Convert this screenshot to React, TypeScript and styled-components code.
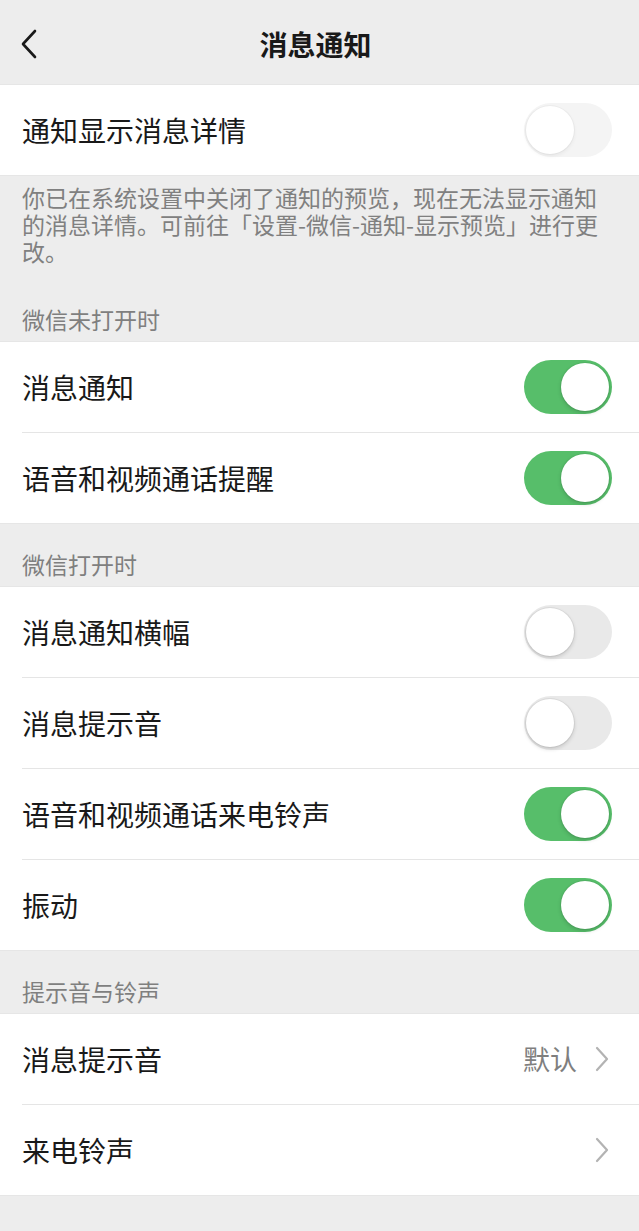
import React from "react";
import styled, { createGlobalStyle } from "styled-components";

const GlobalStyle = createGlobalStyle`
  html, body {
    margin: 0;
    padding: 0;
    background: #ededed;
  }
  body {
    font-family: "Noto Sans CJK SC", "Noto Sans", sans-serif;
    -webkit-font-smoothing: antialiased;
  }
  * { box-sizing: border-box; }
`;

const Page = styled.div`
  width: 639px;
  min-height: 1231px;
  background: #ededed;
  display: flex;
  flex-direction: column;
`;

const Header = styled.header`
  height: 84px;
  display: grid;
  grid-template-columns: 80px 1fr 88px;
  align-items: center;
  padding-top: 4px;
`;

const BackButton = styled.div`
  display: flex;
  align-items: center;
  padding-left: 20px;
`;

const Title = styled.h1`
  margin: 0;
  text-align: center;
  font-size: 28px;
  font-weight: 700;
  color: #191919;
  line-height: 36px;
`;

const Group = styled.section`
  background: #fff;
  border-top: 1px solid #e6e6e6;
  border-bottom: 1px solid #e6e6e6;
  display: flex;
  flex-direction: column;
`;

const Row = styled.div<{ $divider?: boolean }>`
  height: ${(p) => (p.$divider ? 91 : 90)}px;
  margin-left: 22px;
  padding-right: 27px;
  display: flex;
  align-items: center;
  border-top: ${(p) => (p.$divider ? "1px solid #e5e5e5" : "none")};
`;

const Label = styled.span`
  flex: 1;
  font-size: 28px;
  color: #191919;
  line-height: 36px;
`;

const Value = styled.span`
  font-size: 27px;
  color: #7f7f7f;
  line-height: 36px;
  margin-right: 18px;
`;

const Chevron = styled.svg`
  width: 14px;
  height: 26px;
  margin-right: 3px;
  display: block;
`;

const Note = styled.p`
  margin: 0;
  padding: 8px 22px 14px;
  font-size: 23px;
  line-height: 27px;
  color: #808080;
`;

const SectionTitle = styled.div`
  padding: 27px 22px 8px;
  font-size: 23px;
  line-height: 27px;
  color: #7f7f7f;
`;

type ToggleState = "on" | "off" | "disabled";

const Track = styled.div<{ $state: ToggleState }>`
  position: relative;
  width: 88px;
  height: 54px;
  border-radius: 27px;
  flex-shrink: 0;
  background: ${(p) =>
    p.$state === "on" ? "#57be6a" : p.$state === "off" ? "#e9e9e9" : "#f4f4f4"};
`;

const Knob = styled.div<{ $state: ToggleState }>`
  position: absolute;
  top: 3px;
  left: ${(p) => (p.$state === "on" ? "37px" : "2px")};
  width: 48px;
  height: 48px;
  border-radius: 50%;
  background: #fff;
  box-shadow: ${(p) =>
    p.$state === "disabled"
      ? "0 2px 4px rgba(0,0,0,0.06), 0 0 0 1px rgba(0,0,0,0.03)"
      : "0 2px 4px rgba(0,0,0,0.16), 0 0 0 1px rgba(0,0,0,0.05)"};
`;

const Toggle = ({ state }: { state: ToggleState }) => (
  <Track $state={state}>
    <Knob $state={state} />
  </Track>
);

const ChevronRight = () => (
  <Chevron viewBox="0 0 14 26">
    <polyline
      points="2,2 12,13 2,24"
      fill="none"
      stroke="#b3b3b3"
      strokeWidth="2.2"
      strokeLinecap="round"
      strokeLinejoin="round"
    />
  </Chevron>
);

const BackIcon = () => (
  <svg width="18" height="30" viewBox="0 0 18 30">
    <polyline
      points="15,2 3,15 15,28"
      fill="none"
      stroke="#191919"
      strokeWidth="2.6"
      strokeLinecap="round"
      strokeLinejoin="round"
    />
  </svg>
);

type ToggleItem = { label: string; state: ToggleState };

const closedItems: ToggleItem[] = [
  { label: "消息通知", state: "on" },
  { label: "语音和视频通话提醒", state: "on" },
];

const openItems: ToggleItem[] = [
  { label: "消息通知横幅", state: "off" },
  { label: "消息提示音", state: "off" },
  { label: "语音和视频通话来电铃声", state: "on" },
  { label: "振动", state: "on" },
];

const ToggleGroup = ({ items }: { items: ToggleItem[] }) => (
  <Group>
    {items.map((it, i) => (
      <Row key={it.label} $divider={i > 0}>
        <Label>{it.label}</Label>
        <Toggle state={it.state} />
      </Row>
    ))}
  </Group>
);

export default function App() {
  return (
    <>
      <GlobalStyle />
      <Page>
        <Header>
          <BackButton>
            <BackIcon />
          </BackButton>
          <Title>消息通知</Title>
          <div />
        </Header>

        <Group>
          <Row>
            <Label>通知显示消息详情</Label>
            <Toggle state="disabled" />
          </Row>
        </Group>
        <Note>
          你已在系统设置中关闭了通知的预览，现在无法显示通知的消息详情。可前往「设置-微信-通知-显示预览」进行更改。
        </Note>

        <SectionTitle>微信未打开时</SectionTitle>
        <ToggleGroup items={closedItems} />

        <SectionTitle>微信打开时</SectionTitle>
        <ToggleGroup items={openItems} />

        <SectionTitle>提示音与铃声</SectionTitle>
        <Group>
          <Row>
            <Label>消息提示音</Label>
            <Value>默认</Value>
            <ChevronRight />
          </Row>
          <Row $divider>
            <Label>来电铃声</Label>
            <ChevronRight />
          </Row>
        </Group>
      </Page>
    </>
  );
}
